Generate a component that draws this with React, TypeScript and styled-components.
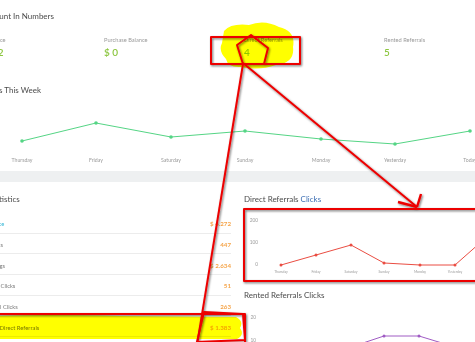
import React from 'react';
import styled, { createGlobalStyle } from 'styled-components';

const GlobalStyle = createGlobalStyle`
  html, body { margin: 0; padding: 0; background: #eef0f1; }
  body { font-family: Lato, 'Open Sans', sans-serif; overflow: hidden; }
`;

type Pt = [number, number];

const stats = [
  { label: 'Account Balance', value: '$ 102.72' },
  { label: 'Purchase Balance', value: '$ 0' },
  { label: 'Direct Referrals', value: '4' },
  { label: 'Rented Referrals', value: '5' },
];

const rows = [
  { label: 'Account Balance', value: '$ 4.272', link: true },
  { label: 'Total Paid Clicks', value: '447' },
  { label: 'Referral Earnings', value: '$ 2.634' },
  { label: 'Direct Referral Clicks', value: '51' },
  { label: 'Rented Referral Clicks', value: '263' },
  { label: 'Earnings From Direct Referrals', value: '$ 1.383' },
];

const days = ['Thursday', 'Friday', 'Saturday', 'Sunday', 'Monday', 'Yesterday', 'Today'];

export default function App() {
  const week: Pt[] = [[22, 46], [96, 28], [171, 42], [245, 36], [321, 44], [395, 49], [470, 36]];
  const direct: Pt[] = [[44, 60], [79, 50], [114, 40], [147, 58], [183, 60], [218, 60], [252, 30]];
  const rented: Pt[] = [[114, 46], [147, 35], [182, 35], [218, 46]];

  return (
    <>
      <GlobalStyle />
      <Page>
        <TopCard>
          <Shifted>
            <SectionTitle $top={11}>Account In Numbers</SectionTitle>
            <StatsRow>
              {stats.map((s) => (
                <Stat key={s.label}>
                  <StatLabel>{s.label}</StatLabel>
                  <StatValue>{s.value}</StatValue>
                </Stat>
              ))}
            </StatsRow>
            <SectionTitle $top={27}>Clicks This Week</SectionTitle>
          </Shifted>
          <Chart width={475} height={76}>
            <Line points={week} color="#55d585" r={1.8} />
            {week.map(([x], i) => (
              <AxisText key={days[i]} x={x} y={66} textAnchor="middle" fontSize={5.2}>
                {days[i]}
              </AxisText>
            ))}
          </Chart>
        </TopCard>

        <BottomCard>
          <LeftColumn>
            <CardTitle $indent={-43}>Account Statistics</CardTitle>
            <RowList>
              {rows.map((r) => (
                <StatRow key={r.label}>
                  <RowLabel $link={r.link}>{r.label}</RowLabel>
                  <RowValue>{r.value}</RowValue>
                </StatRow>
              ))}
            </RowList>
          </LeftColumn>
          <RightColumn>
            <CardTitle $indent={7}>
              Direct Referrals <Accent>Clicks</Accent>
            </CardTitle>
            <Chart width={260} height={78}>
              <AxisText x={21} y={16} textAnchor="end" fontSize={4.8}>200</AxisText>
              <AxisText x={21} y={38} textAnchor="end" fontSize={4.8}>100</AxisText>
              <AxisText x={21} y={60} textAnchor="end" fontSize={4.8}>0</AxisText>
              <Line points={direct} color="#ea4d42" r={1.5} />
              {direct.slice(0, 6).map(([x], i) => (
                <AxisText key={days[i]} x={x} y={67} textAnchor="middle" fontSize={3.4}>
                  {days[i]}
                </AxisText>
              ))}
            </Chart>
            <CardTitle $indent={7} $top={6}>Rented Referrals Clicks</CardTitle>
            <Chart width={260} height={60}>
              <AxisText x={19} y={17} textAnchor="end" fontSize={4.8}>20</AxisText>
              <AxisText x={19} y={40} textAnchor="end" fontSize={4.8}>10</AxisText>
              <Line points={rented} color="#a05cc4" r={1.5} />
            </Chart>
          </RightColumn>
        </BottomCard>

        <Annotations width={475} height={342}>
          <defs>
            <filter id="shade" x="-20%" y="-20%" width="140%" height="140%">
              <feDropShadow dx="1" dy="1.2" stdDeviation="0.9" floodColor="#000" floodOpacity="0.55" />
            </filter>
          </defs>
          <Marker d="M224 31 Q231 23 249 25 Q264 19 279 27 Q296 31 293 47 Q295 63 276 65 Q259 71 241 67 Q228 68 226 59 Q218 51 222 43 Z" />
          <Marker d="M-5 316 Q40 314 120 316 L236 317 Q244 321 240 328 Q245 335 237 339 L-5 339 Z" />
          <g filter="url(#shade)" fill="none" stroke="#ec0000" strokeWidth={2} strokeLinejoin="round">
            <rect x={211} y={37} width={89} height={27} />
            <path d="M237 45 L251 35 L268 48 L264 64 L243 64 Z" />
            <path d="M243 64 L197 345" />
            <path d="M243 63 L417 207" />
            <path d="M417 207 L398 202 M417 207 L421 194" strokeWidth={2.4} />
            <rect x={244} y={209} width={240} height={72} />
            <rect x={-6} y={314} width={251} height={30} />
            <path d="M204 312 L243 314 L245 340 L197 342 Z" />
          </g>
          <circle cx={204} cy={313} r={1.6} fill="#ec0000" />
        </Annotations>
      </Page>
    </>
  );
}

function Line({ points, color, r }: { points: Pt[]; color: string; r: number }) {
  return (
    <>
      <polyline points={points.map((p) => p.join(',')).join(' ')} fill="none" stroke={color} strokeWidth={1} />
      {points.map(([x, y]) => (
        <circle key={x} cx={x} cy={y} r={r} fill={color} />
      ))}
    </>
  );
}

const Page = styled.div`
  position: relative;
  width: 475px;
  height: 342px;
  overflow: hidden;
  background: #eef0f1;
`;

const TopCard = styled.section`
  background: #fff;
  height: 171px;
  display: flex;
  flex-direction: column;
  overflow: hidden;
`;

const Shifted = styled.div`
  margin-left: -36px;
`;

const SectionTitle = styled.h3<{ $top: number }>`
  margin: ${(p) => p.$top}px 0 0 18px;
  font-size: 8px;
  line-height: 10px;
  font-weight: 400;
  color: #4b4b4b;
  white-space: nowrap;
`;

const StatsRow = styled.div`
  display: grid;
  grid-template-columns: repeat(4, 140px);
  margin-top: 14.5px;
`;

const Stat = styled.div`
  display: flex;
  flex-direction: column;
  gap: 4px;
`;

const StatLabel = styled.span`
  font-size: 5.7px;
  line-height: 7px;
  color: #9a9a9a;
  white-space: nowrap;
`;

const StatValue = styled.span`
  font-size: 10px;
  line-height: 11px;
  font-weight: 600;
  color: #8cc63f;
  white-space: nowrap;
`;

const Chart = styled.svg`
  display: block;
  flex: none;
  overflow: visible;
`;

const AxisText = styled.text`
  fill: #9b9b9b;
  font-family: Lato, sans-serif;
  dominant-baseline: middle;
`;

const BottomCard = styled.section`
  margin-top: 11px;
  background: #fff;
  height: 170px;
  display: grid;
  grid-template-columns: 237px 1fr;
`;

const LeftColumn = styled.div`
  padding: 11px 6px 0 0;
  min-width: 0;
`;

const RightColumn = styled.div`
  padding-top: 11px;
  min-width: 0;
`;

const CardTitle = styled.h4<{ $indent: number; $top?: number }>`
  margin: ${(p) => p.$top ?? 0}px 0 0 ${(p) => p.$indent}px;
  font-size: 8px;
  line-height: 12px;
  font-weight: 400;
  color: #4b4b4b;
  white-space: nowrap;
`;

const Accent = styled.span`
  color: #3d6fb4;
`;

const RowList = styled.div`
  margin: 8px 0 0 -38px;
`;

const StatRow = styled.div`
  display: flex;
  justify-content: space-between;
  align-items: center;
  height: 20.7px;
  padding-top: 2px;
  box-sizing: border-box;
  border-bottom: 1px solid #ececec;
`;

const RowLabel = styled.span<{ $link?: boolean }>`
  font-size: 5.8px;
  color: ${(p) => (p.$link ? '#35b6d6' : '#7a7a7a')};
  white-space: nowrap;
`;

const RowValue = styled.span`
  font-size: 6.2px;
  font-weight: 700;
  color: #f5a449;
  white-space: nowrap;
`;

const Annotations = styled.svg`
  position: absolute;
  top: 0;
  left: 0;
  pointer-events: none;
  overflow: visible;
`;

const Marker = styled.path`
  fill: #ffff00;
  mix-blend-mode: multiply;
`;
